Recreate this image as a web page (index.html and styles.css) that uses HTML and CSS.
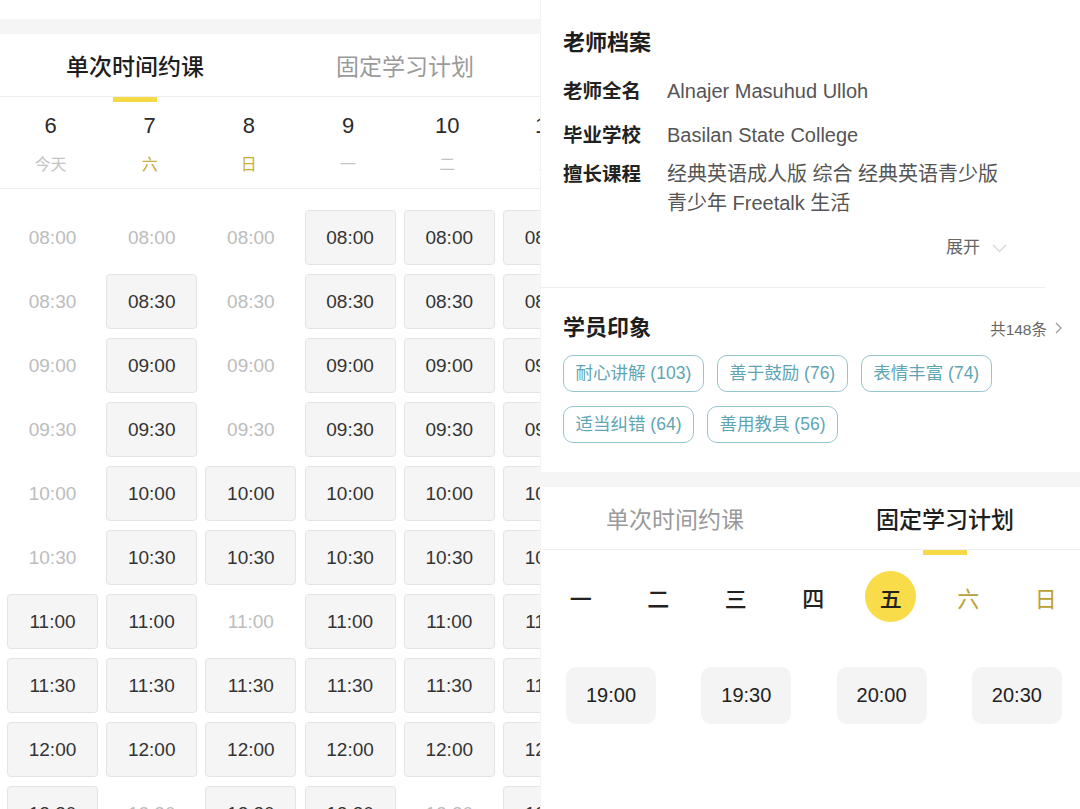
FILE: index.html
```html
<!DOCTYPE html>
<html lang="zh-CN">
  <head>
    <meta charset="UTF-8">
    <title>老师档案</title>
    <link rel="stylesheet" href="styles.css">
  </head>
  <body>
    <div class="panel">
      <div class="top-space"></div>
      <div class="band"></div>
      <div class="tabs">
        <div class="tab active">单次时间约课</div>
        <div class="tab">固定学习计划</div>
      </div>
      <div class="days">
        <div class="day"><span class="num">6</span><span class="wk">今天</span></div>
        <div class="day"><span class="num">7</span><span class="wk weekend">六</span></div>
        <div class="day"><span class="num">8</span><span class="wk weekend">日</span></div>
        <div class="day"><span class="num">9</span><span class="wk">一</span></div>
        <div class="day"><span class="num">10</span><span class="wk">二</span></div>
        <div class="day"><span class="num">11</span><span class="wk">三</span></div>
      </div>
      <div class="slots">
        <div class="slot off">08:00</div><div class="slot off">08:00</div><div class="slot off">08:00</div><div class="slot">08:00</div><div class="slot">08:00</div><div class="slot">08:00</div>
        <div class="slot off">08:30</div><div class="slot">08:30</div><div class="slot off">08:30</div><div class="slot">08:30</div><div class="slot">08:30</div><div class="slot">08:30</div>
        <div class="slot off">09:00</div><div class="slot">09:00</div><div class="slot off">09:00</div><div class="slot">09:00</div><div class="slot">09:00</div><div class="slot">09:00</div>
        <div class="slot off">09:30</div><div class="slot">09:30</div><div class="slot off">09:30</div><div class="slot">09:30</div><div class="slot">09:30</div><div class="slot">09:30</div>
        <div class="slot off">10:00</div><div class="slot">10:00</div><div class="slot">10:00</div><div class="slot">10:00</div><div class="slot">10:00</div><div class="slot">10:00</div>
        <div class="slot off">10:30</div><div class="slot">10:30</div><div class="slot">10:30</div><div class="slot">10:30</div><div class="slot">10:30</div><div class="slot">10:30</div>
        <div class="slot">11:00</div><div class="slot">11:00</div><div class="slot off">11:00</div><div class="slot">11:00</div><div class="slot">11:00</div><div class="slot">11:00</div>
        <div class="slot">11:30</div><div class="slot">11:30</div><div class="slot">11:30</div><div class="slot">11:30</div><div class="slot">11:30</div><div class="slot">11:30</div>
        <div class="slot">12:00</div><div class="slot">12:00</div><div class="slot">12:00</div><div class="slot">12:00</div><div class="slot">12:00</div><div class="slot">12:00</div>
        <div class="slot">12:30</div><div class="slot off">12:30</div><div class="slot">12:30</div><div class="slot">12:30</div><div class="slot off">12:30</div><div class="slot">12:30</div>
      </div>
    </div>

    <div class="panel panel-right">
      <div class="profile">
        <h2 class="section-title">老师档案</h2>
        <div class="row">
          <span class="label">老师全名</span>
          <span class="value">Alnajer Masuhud Ulloh</span>
        </div>
        <div class="row">
          <span class="label">毕业学校</span>
          <span class="value">Basilan State College</span>
        </div>
        <div class="row row-tight">
          <span class="label">擅长课程</span>
          <span class="value">经典英语成人版 综合 经典英语青少版<br>青少年 Freetalk 生活</span>
        </div>
        <div class="more">
          展开
          <svg width="15" height="9" viewBox="0 0 15 9"><polyline points="1,1 7.5,7.5 14,1" fill="none" stroke="#d9d9d9" stroke-width="1.5"/></svg>
        </div>
      </div>

      <div class="impress">
        <div class="impress-head">
          <h2 class="section-title">学员印象</h2>
          <span class="count">共148条
            <svg width="7" height="12" viewBox="0 0 7 12"><polyline points="1,1 6,6 1,11" fill="none" stroke="#999" stroke-width="1.2"/></svg>
          </span>
        </div>
        <div class="tags">
          <span class="tag">耐心讲解 (103)</span>
          <span class="tag">善于鼓励 (76)</span>
          <span class="tag">表情丰富 (74)</span>
          <span class="tag">适当纠错 (64)</span>
          <span class="tag">善用教具 (56)</span>
        </div>
      </div>

      <div class="band"></div>
      <div class="tabs">
        <div class="tab">单次时间约课</div>
        <div class="tab active">固定学习计划</div>
      </div>
      <div class="week">
        <span class="wd">一</span>
        <span class="wd">二</span>
        <span class="wd">三</span>
        <span class="wd">四</span>
        <span class="wd on">五</span>
        <span class="wd weekend">六</span>
        <span class="wd weekend">日</span>
      </div>
      <div class="plan-times">
        <div class="ptime">19:00</div>
        <div class="ptime">19:30</div>
        <div class="ptime">20:00</div>
        <div class="ptime">20:30</div>
      </div>
    </div>
  </body>
</html>
```

FILE: styles.css
```css
* {
    box-sizing: border-box;
    margin: 0;
    padding: 0;
}
html, body {
    height: 809px;
    overflow: hidden;
}
body {
    display: flex;
    background: #fff;
    color: #222;
    font-family: "Liberation Sans", "Noto Sans CJK SC", sans-serif;
}
.panel {
    flex: none;
    width: 540px;
    height: 809px;
    overflow: hidden;
}
.panel-right {
    box-shadow: inset 1px 0 0 #f3f3f3;
}
.top-space {
    height: 19px;
}
.band {
    height: 15px;
    background: #f5f5f5;
}

/* tabs */
.tabs {
    display: flex;
    height: 63px;
    border-bottom: 1px solid #efefef;
}
.tab {
    position: relative;
    flex: 1;
    display: flex;
    align-items: center;
    justify-content: center;
    font-size: 23px;
    color: #9a9a9a;
}
.tab.active {
    color: #1e1e1e;
    font-weight: 500;
}
.tab.active::after {
    content: "";
    position: absolute;
    top: 100%;
    left: 50%;
    width: 44px;
    height: 5px;
    margin: 1px 0 0 -22px;
    background: #f6da45;
}

/* left: dates and slots */
.days {
    display: grid;
    grid-template-columns: repeat(6, 91px);
    column-gap: 8.2px;
    padding: 14px 0 12px 5px;
    border-bottom: 1px solid #efefef;
}
.day {
    display: flex;
    flex-direction: column;
    align-items: center;
}
.day .num {
    font-size: 22px;
    line-height: 30px;
    color: #2a2a2a;
}
.day .wk {
    margin-top: 13px;
    font-size: 16px;
    line-height: 22px;
    color: #c4c4c4;
}
.day .wk.weekend {
    color: #c7ae3e;
}
.slots {
    display: grid;
    grid-template-columns: repeat(6, 91px);
    grid-auto-rows: 55px;
    gap: 9px 8.2px;
    padding: 21px 0 0 7px;
}
.slot {
    display: flex;
    align-items: center;
    justify-content: center;
    font-size: 19px;
    color: #333;
    background: #f5f5f5;
    border: 1px solid #e4e4e4;
    border-radius: 4px;
}
.slot.off {
    background: none;
    border-color: transparent;
    color: #bcbcbc;
}

/* right: profile */
.section-title {
    font-size: 22px;
    line-height: 30px;
    font-weight: bold;
    color: #1e1e1e;
}
.profile {
    margin-right: 35px;
    padding: 28px 38px 28px 23px;
    border-bottom: 1px solid #efefef;
}
.profile .section-title {
    margin-bottom: 19px;
}
.row {
    display: flex;
    font-size: 20px;
    line-height: 29px;
}
.row + .row {
    margin-top: 15px;
}
.row + .row-tight {
    margin-top: 10px;
}
.label {
    flex: none;
    width: 104px;
    font-size: 19.5px;
    font-weight: bold;
    color: #222;
}
.value {
    color: #555;
}
.more {
    display: flex;
    align-items: center;
    justify-content: flex-end;
    gap: 12px;
    margin-top: 19px;
    font-size: 17px;
    line-height: 22px;
    color: #666;
}

/* right: impressions */
.impress {
    padding: 25px 18px 29px 23px;
}
.impress-head {
    display: flex;
    align-items: center;
    justify-content: space-between;
}
.count {
    display: flex;
    align-items: center;
    gap: 8px;
    font-size: 15.5px;
    color: #666;
}
.tags {
    display: flex;
    flex-wrap: wrap;
    gap: 14px 13px;
    margin-top: 12px;
    width: 450px;
}
.tag {
    height: 37px;
    padding: 0 11.5px;
    border: 1.5px solid #94c6cc;
    border-radius: 10px;
    font-size: 17.5px;
    line-height: 34px;
    color: #5fa5b5;
}

/* right: fixed plan */
.week {
    display: grid;
    grid-template-columns: repeat(7, 77.5px);
    padding-left: 2px;
    margin-top: 21px;
}
.wd {
    justify-self: center;
    display: flex;
    align-items: center;
    justify-content: center;
    width: 51px;
    height: 51px;
    font-size: 22px;
    font-weight: 500;
    color: #222;
}
.wd.on {
    border-radius: 50%;
    background: #f8dc4a;
}
.wd.weekend {
    font-weight: normal;
    color: #b9a13a;
}
.plan-times {
    display: grid;
    grid-template-columns: repeat(4, 90px);
    column-gap: 45.3px;
    padding-left: 26px;
    margin-top: 45px;
}
.ptime {
    display: flex;
    align-items: center;
    justify-content: center;
    height: 57px;
    font-size: 20px;
    color: #222;
    background: #f4f4f4;
    border-radius: 10px;
}
```
